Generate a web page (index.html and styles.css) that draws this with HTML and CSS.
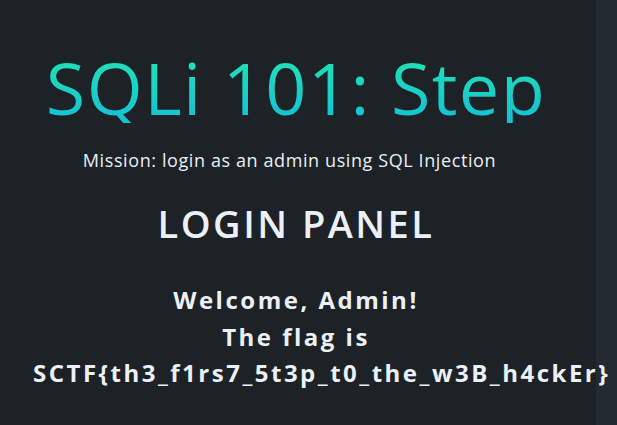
FILE: index.html
```html
<!DOCTYPE html>
<html lang="en">
<head>
<meta charset="utf-8">
<title>SQLi 101: Step</title>
<link rel="stylesheet" href="styles.css">
</head>
<body>
<main class="page">
  <h1 class="title">SQLi 101: Step</h1>
  <p class="mission">Mission: login as an admin using SQL Injection</p>
  <h2 class="panel">LOGIN PANEL</h2>
  <div class="result">
    <p class="line">Welcome, Admin!</p>
    <p class="line">The flag is</p>
    <p class="line flag">SCTF{th3_f1rs7_5t3p_t0_the_w3B_h4ckEr}</p>
  </div>
</main>
</body>
</html>
```
FILE: styles.css
```css
html, body {
  margin: 0;
  padding: 0;
  height: 100%;
}
body {
  background: #222b31;
  font-family: "Open Sans", "Noto Sans", sans-serif;
  color: #eaf0f6;
  overflow: hidden;
}
.page {
  width: 596px;
  box-sizing: border-box;
  min-height: 100%;
  background: #1c2226;
  padding: 51px 37px 0 33px;
  text-align: center;
}
.title {
  margin: 0;
  font-size: 72px;
  line-height: 72px;
  font-weight: 400;
  letter-spacing: 1.4px;
  background: linear-gradient(180deg, #22e4b2 0%, #14c0d6 100%);
  -webkit-background-clip: text;
  background-clip: text;
  color: transparent;
  white-space: nowrap;
}
.mission {
  margin: 27px 13px 0 0;
  font-size: 18px;
  line-height: 21px;
  font-weight: 400;
  letter-spacing: 0.6px;
  white-space: nowrap;
}
.panel {
  margin: 32px 0 0;
  font-size: 38px;
  line-height: 40px;
  font-weight: 600;
  letter-spacing: 2.5px;
}
.result {
  margin-top: 39px;
}
.line {
  margin: 0;
  font-size: 24px;
  line-height: 36.5px;
  font-weight: 700;
  letter-spacing: 2.5px;
  white-space: nowrap;
}
.flag {
  text-align: left;
}
```
